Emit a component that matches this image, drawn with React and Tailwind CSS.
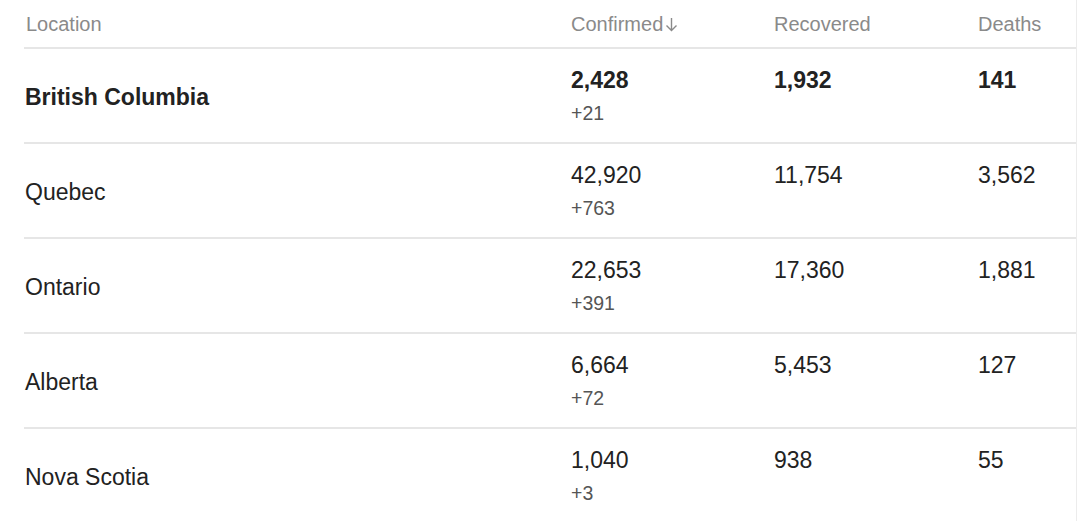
const ROWS = [
  { name: "British Columbia", confirmed: "2,428", delta: "+21", recovered: "1,932", deaths: "141", bold: true },
  { name: "Quebec", confirmed: "42,920", delta: "+763", recovered: "11,754", deaths: "3,562" },
  { name: "Ontario", confirmed: "22,653", delta: "+391", recovered: "17,360", deaths: "1,881" },
  { name: "Alberta", confirmed: "6,664", delta: "+72", recovered: "5,453", deaths: "127" },
  { name: "Nova Scotia", confirmed: "1,040", delta: "+3", recovered: "938", deaths: "55" },
];

function ArrowDown() {
  return (
    <svg width="13" height="15" viewBox="0 0 13 15" fill="none" stroke="currentColor" strokeWidth="1.4" className="ml-[2px] mt-[1px]">
      <path d="M6.5 1v12.5M1.5 8.5l5 5 5-5" />
    </svg>
  );
}

export default function App() {
  return (
    <div className="h-[521px] w-[1080px] overflow-hidden bg-white font-[Liberation_Sans,Arial,sans-serif] text-[#222]">
      <div className="ml-6 w-[1053px] border-r border-[#ececec]">
        {/* Header */}
        <div className="flex h-[49px] items-center border-b-2 border-[#e6e6e6] text-[20px] text-[#8a8a8a]">
          <div className="w-[547px] pl-[2px]">Location</div>
          <div className="flex w-[203px] items-center">
            Confirmed
            <ArrowDown />
          </div>
          <div className="w-[204px]">Recovered</div>
          <div>Deaths</div>
        </div>

        {ROWS.map((r) => (
          <div key={r.name} className="flex h-[95px] border-b-2 border-[#e6e6e6] text-[23px]">
            <div className={`flex w-[547px] items-center pl-[1px] pt-[3px] ${r.bold ? "font-bold" : ""}`}>{r.name}</div>
            <div className="w-[203px] pt-[18px]">
              <div className={`leading-[26px] ${r.bold ? "font-bold" : ""}`}>{r.confirmed}</div>
              <div className="mt-[9px] text-[19.5px] leading-[22px] text-[#555]">{r.delta}</div>
            </div>
            <div className={`w-[204px] pt-[18px] leading-[26px] ${r.bold ? "font-bold" : ""}`}>{r.recovered}</div>
            <div className={`pt-[18px] leading-[26px] ${r.bold ? "font-bold" : ""}`}>{r.deaths}</div>
          </div>
        ))}
      </div>
    </div>
  );
}
